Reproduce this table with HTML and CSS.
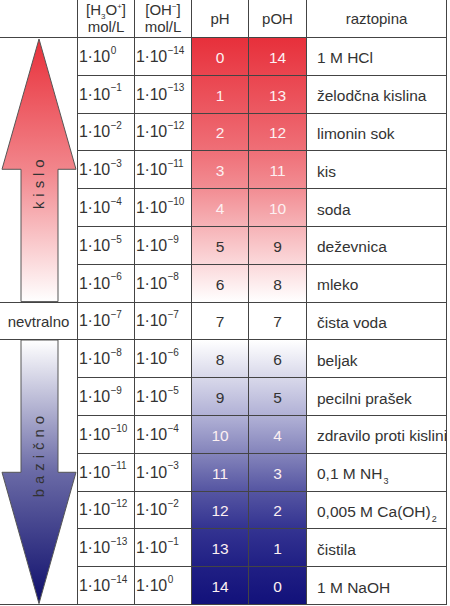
FILE: index.html
```html
<!DOCTYPE html>
<html lang="sl">
<head>
  <meta charset="UTF-8" />
  <title>pH lestvica</title>
  <link rel="stylesheet" href="styles.css">
</head>
<body>

<div class="ph-table" id="phTable">
  <div class="side side-head"></div>
  <div class="side arrow-up">
    <svg viewBox="0 0 77 265" preserveAspectRatio="none">
      <defs>
        <linearGradient id="acidFill" x1="0" y1="0" x2="0" y2="1">
          <stop offset="0" stop-color="#e8303a"/>
          <stop offset="0.5" stop-color="#f2868c"/>
          <stop offset="1" stop-color="#ffffff"/>
        </linearGradient>
      </defs>
      <polygon points="39,1 76,132 58,132 58,265 21,265 21,132 2,132" fill="url(#acidFill)" stroke="#555" stroke-width="1"/>
      <text class="arrow-label" transform="translate(44 172) rotate(-90)">kislo</text>
    </svg>
  </div>
  <div class="side neutral">nevtralno</div>
  <div class="side arrow-down">
    <svg viewBox="0 0 77 265" preserveAspectRatio="none">
      <defs>
        <linearGradient id="baseFill" x1="0" y1="0" x2="0" y2="1">
          <stop offset="0" stop-color="#ffffff"/>
          <stop offset="0.5" stop-color="#6a6aa6"/>
          <stop offset="1" stop-color="#0f0f6c"/>
        </linearGradient>
      </defs>
      <polygon points="21,0 58,0 58,133 76,133 39,265 2,133 21,133" fill="url(#baseFill)" stroke="#555" stroke-width="1"/>
      <text class="arrow-label" transform="translate(44 158) rotate(-90)">bazično</text>
    </svg>
  </div>

  <div class="cell head"><span>[H<sub>3</sub>O<sup>+</sup>]<br>mol/L</span></div>
  <div class="cell head"><span>[OH<sup>−</sup>]<br>mol/L</span></div>
  <div class="cell head"><span>pH</span></div>
  <div class="cell head"><span>pOH</span></div>
  <div class="cell head"><span>raztopina</span></div>
</div>

<script>
const solutions = [
  "1 M HCl",
  "želodčna kislina",
  "limonin sok",
  "kis",
  "soda",
  "deževnica",
  "mleko",
  "čista voda",
  "beljak",
  "pecilni prašek",
  "zdravilo proti kislini",
  "0,1 M NH<sub>3</sub>",
  "0,005 M Ca(OH)<sub>2</sub>",
  "čistila",
  "1 M NaOH"
];

const acidStops = [[0, [231, 48, 59]], [0.5, [240, 122, 129]], [1, [255, 255, 255]]];
const baseStops = [[0, [255, 255, 255]], [0.36, [157, 157, 203]], [0.5, [106, 106, 170]],
                   [0.64, [64, 64, 154]], [0.79, [38, 38, 136]], [1, [18, 17, 122]]];

function mix(stops, t) {
  for (let i = 1; i < stops.length; i++) {
    if (t <= stops[i][0]) {
      const [t0, c0] = stops[i - 1];
      const [t1, c1] = stops[i];
      const k = (t - t0) / (t1 - t0);
      return "rgb(" + c0.map((v, j) => Math.round(v + (c1[j] - v) * k)).join(",") + ")";
    }
  }
  return "rgb(" + stops[stops.length - 1][1].join(",") + ")";
}

function power(exp) {
  const e = exp === 0 ? "0" : "−" + Math.abs(exp);
  return `<span>1·10<sup>${e}</sup></span>`;
}

function shade(ph) {
  if (ph === 7) return "";
  const stops = ph < 7 ? acidStops : baseStops;
  const i = ph < 7 ? ph : ph - 8;
  const top = mix(stops, i / 7);
  const bottom = mix(stops, (i + 1) / 7);
  return `linear-gradient(${top}, ${bottom})`;
}

function buildRows() {
  const table = document.getElementById("phTable");
  for (let ph = 0; ph <= 14; ph++) {
    const light = (ph <= 4) || (ph >= 10);
    const bg = shade(ph);
    const cells = [
      `<div class="cell conc">${power(-ph)}</div>`,
      `<div class="cell conc">${power(ph - 14)}</div>`,
      `<div class="cell num${light ? " light" : ""}" style="background:${bg}">${ph}</div>`,
      `<div class="cell num${light ? " light" : ""}" style="background:${bg}">${14 - ph}</div>`,
      `<div class="cell name"><span>${solutions[ph]}</span></div>`
    ];
    table.insertAdjacentHTML("beforeend", cells.join(""));
  }
}

buildRows();
</script>

</body>
</html>
```

FILE: styles.css
```css
body {
  margin: 0;
  background: #fff;
  font-family: "Liberation Sans", Arial, sans-serif;
  color: #333;
}
.ph-table {
  display: grid;
  grid-template-columns: 78px 57px 57px 57px 58px 140px;
  grid-template-rows: 38px repeat(15, 37.8px);
  width: 447px;
}
.side {
  grid-column: 1;
  border-right: 1px solid #444;
  border-bottom: 1px solid #444;
  box-sizing: border-box;
}
.side-head {
  grid-row: 1;
}
.arrow-up {
  grid-row: 2 / span 7;
}
.neutral {
  grid-row: 9;
  display: flex;
  align-items: center;
  justify-content: center;
  font-size: 15px;
  padding-top: 2px;
}
.arrow-down {
  grid-row: 10 / span 7;
}
.arrow-up svg, .arrow-down svg {
  display: block;
  width: 77px;
  height: 100%;
}
.arrow-label {
  font-family: "Liberation Sans", Arial, sans-serif;
  font-size: 15px;
  letter-spacing: 5px;
  fill: #333;
}
.cell {
  display: flex;
  align-items: center;
  border-right: 1px solid #444;
  border-bottom: 1px solid #444;
  box-sizing: border-box;
  font-size: 15.5px;
  overflow: hidden;
  white-space: nowrap;
}
.head {
  justify-content: center;
  text-align: center;
  font-size: 15px;
  line-height: 17px;
  padding-bottom: 1px;
}
.conc {
  padding-left: 1px;
  padding-top: 1px;
  font-size: 16px;
  letter-spacing: -0.3px;
}
.num {
  justify-content: center;
  padding-top: 3px;
}
.num.light {
  color: #fdf0f2;
}
.name {
  padding-left: 10px;
  padding-top: 4px;
}
sup, sub {
  font-size: 9px;
  line-height: 0;
}
.conc sup {
  font-size: 10px;
  position: relative;
  top: -2px;
  margin-left: 1px;
}
.head sup, .head sub {
  font-size: 8px;
}
.name sub {
  font-size: 9px;
  position: relative;
  top: 1px;
  margin-left: 1px;
}
```
